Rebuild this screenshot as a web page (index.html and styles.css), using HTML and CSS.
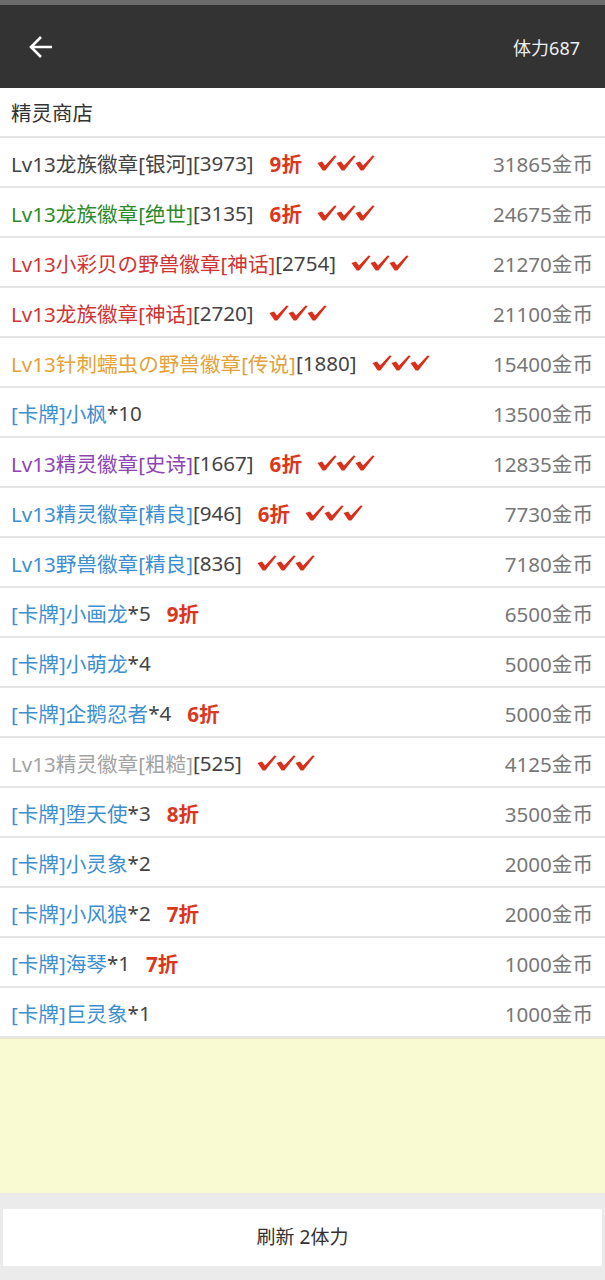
FILE: index.html
```html
<!DOCTYPE html>
<html lang="zh">
<head>
    <meta charset="UTF-8">
    <meta name="viewport" content="width=device-width, initial-scale=1.0">
    <title>精灵商店</title>
    <link rel="stylesheet" href="styles.css">
</head>
<body>
    <div class="topbar">
        <svg class="back" width="26" height="24" viewBox="0 0 26 24"><path d="M24 12H3M13 2L3 12l10 10" fill="none" stroke="#fff" stroke-width="2.6"/></svg>
        <span class="energy">体力687</span>
    </div>

    <div class="title">精灵商店</div>

    <ul class="list">
        <li><span><span class="c-gray">Lv13龙族徽章[银河]</span>[3973]<b class="off">9折</b><i class="ok"></i></span><span class="price">31865金币</span></li>
        <li><span><span class="c-green">Lv13龙族徽章[绝世]</span>[3135]<b class="off">6折</b><i class="ok"></i></span><span class="price">24675金币</span></li>
        <li><span><span class="c-red">Lv13小彩贝の野兽徽章[神话]</span>[2754]<i class="ok"></i></span><span class="price">21270金币</span></li>
        <li><span><span class="c-red">Lv13龙族徽章[神话]</span>[2720]<i class="ok"></i></span><span class="price">21100金币</span></li>
        <li><span><span class="c-orange">Lv13针刺蠕虫の野兽徽章[传说]</span>[1880]<i class="ok"></i></span><span class="price">15400金币</span></li>
        <li><span><span class="c-blue">[卡牌]小枫</span>*10</span><span class="price">13500金币</span></li>
        <li><span><span class="c-purple">Lv13精灵徽章[史诗]</span>[1667]<b class="off">6折</b><i class="ok"></i></span><span class="price">12835金币</span></li>
        <li><span><span class="c-blue">Lv13精灵徽章[精良]</span>[946]<b class="off">6折</b><i class="ok"></i></span><span class="price">7730金币</span></li>
        <li><span><span class="c-blue">Lv13野兽徽章[精良]</span>[836]<i class="ok"></i></span><span class="price">7180金币</span></li>
        <li><span><span class="c-blue">[卡牌]小画龙</span>*5<b class="off">9折</b></span><span class="price">6500金币</span></li>
        <li><span><span class="c-blue">[卡牌]小萌龙</span>*4</span><span class="price">5000金币</span></li>
        <li><span><span class="c-blue">[卡牌]企鹅忍者</span>*4<b class="off">6折</b></span><span class="price">5000金币</span></li>
        <li><span><span class="c-light">Lv13精灵徽章[粗糙]</span>[525]<i class="ok"></i></span><span class="price">4125金币</span></li>
        <li><span><span class="c-blue">[卡牌]堕天使</span>*3<b class="off">8折</b></span><span class="price">3500金币</span></li>
        <li><span><span class="c-blue">[卡牌]小灵象</span>*2</span><span class="price">2000金币</span></li>
        <li><span><span class="c-blue">[卡牌]小风狼</span>*2<b class="off">7折</b></span><span class="price">2000金币</span></li>
        <li><span><span class="c-blue">[卡牌]海琴</span>*1<b class="off">7折</b></span><span class="price">1000金币</span></li>
        <li><span><span class="c-blue">[卡牌]巨灵象</span>*1</span><span class="price">1000金币</span></li>
    </ul>

    <div class="notice"></div>

    <div class="refresh">刷新 2体力</div>

    <script>
        // three red ticks after each badge
        var one = 'l4.5-1.6 3 4.2 9.5-10.2 2.2 0.6-11.4 14.4h-2.6z"/>';
        var tick = '<svg width="58" height="17" viewBox="0 0 58 17">'
            + '<path d="M0.5 9' + one
            + '<path d="M19.5 9' + one
            + '<path d="M38.5 9' + one + '</svg>';
        document.querySelectorAll('.ok').forEach(function(el) {
            el.innerHTML = tick;
        });
    </script>
</body>
</html>
```

FILE: styles.css
```css
body{margin: 0; background-color: #ebebeb; font-family: "Noto Sans", "Noto Sans CJK SC", sans-serif; color: #444;}
.topbar{height: 83px; background-color: #333; border-top: 5px solid #6b6b6b; display: flex; align-items: center; justify-content: space-between; padding: 0 25px 0 28px;}
.back{display: block;}
.energy{color: #eee; font-size: 18px;}
.title{background-color: #fff; height: 48px; line-height: 50px; padding-left: 11px; font-size: 20.5px; color: #333; border-bottom: 2px solid #e6e6e6;}
.list{list-style: none; margin: 0; padding: 0; background-color: #fff;}
.list li{height: 47px; border-bottom: 2px solid #e6e6e6; display: flex; align-items: center; justify-content: space-between; padding: 1px 12px 0 11px; font-size: 20.6px;}
.list li > span:first-child{display: flex; align-items: center;}
.price{color: #777;}
.off{color: #d9381e; font-weight: bold; margin-left: 16px;}
.ok{display: inline-flex; margin-left: 15px; fill: #d9301c;}
.c-gray{color: #444;}
.c-green{color: #2c8a2c;}
.c-red{color: #d03434;}
.c-orange{color: #e3a23a;}
.c-blue{color: #3d8fd0;}
.c-purple{color: #8c45b4;}
.c-light{color: #a3a3a3;}
.notice{height: 154px; background-color: #f9f9d2; border-top: 1px solid #e6e6c8;}
.refresh{margin: 16px 3px 0; background-color: #fff; height: 57px; line-height: 57px; text-align: center; font-size: 19px; color: #333;}
```
